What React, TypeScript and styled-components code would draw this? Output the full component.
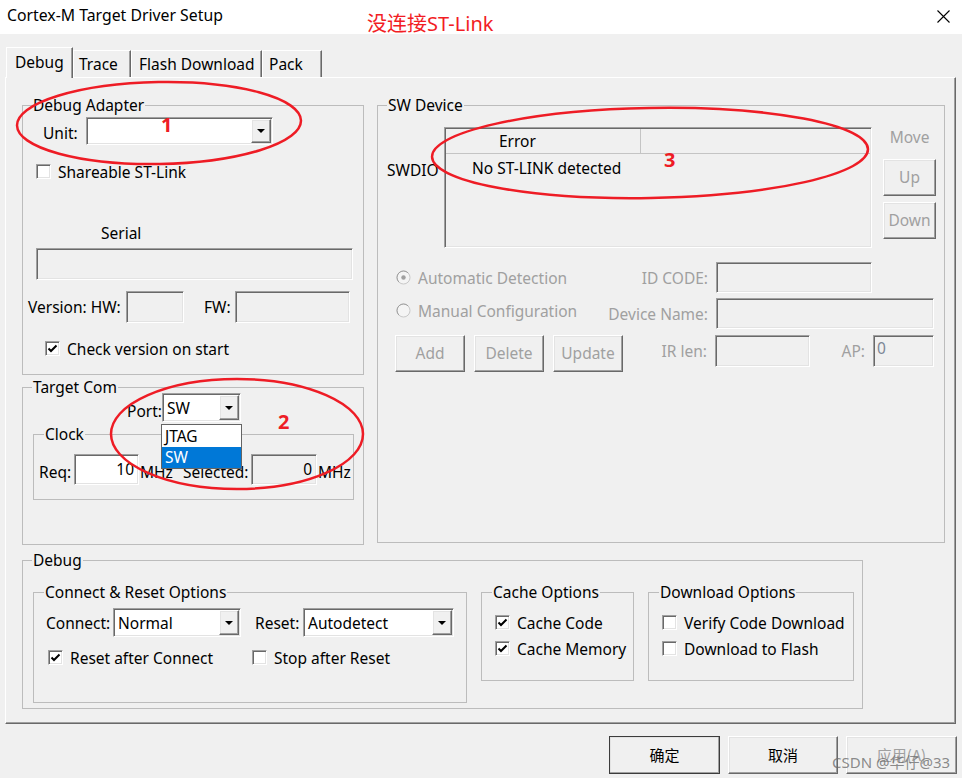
import styled, { createGlobalStyle, css } from 'styled-components';

const GlobalStyle = createGlobalStyle`
  * { box-sizing: border-box; }
  html, body { margin: 0; padding: 0; background: #f0f0f0; }
  body {
    font-family: 'Noto Sans', 'Noto Sans CJK SC', sans-serif;
    font-size: 15.5px;
    line-height: 20px;
    color: #000;
  }
`;

const sunken = css`
  border-style: solid;
  border-width: 1px;
  border-color: #a0a0a0 #ffffff #ffffff #a0a0a0;
  box-shadow: inset 1px 1px #696969, inset -1px -1px #e3e3e3;
`;

const raised = css`
  border-style: solid;
  border-width: 1px;
  border-color: #ffffff #696969 #696969 #ffffff;
  box-shadow: inset -1px -1px #a0a0a0, inset 1px 1px #e3e3e3;
  background: #f0f0f0;
`;

const Window = styled.div`
  position: relative;
  width: 962px;
  height: 778px;
  background: #f0f0f0;
  overflow: hidden;
`;

const TitleBar = styled.div`
  height: 34px;
  background: #fff;
  display: flex;
  align-items: flex-start;
`;

const Title = styled.div`
  width: 367px;
  padding: 5px 0 0 7px;
  font-size: 15.8px;
  white-space: nowrap;
`;

const Annotation = styled.div`
  margin-top: 12px;
  color: #f21d24;
  font-family: 'Noto Sans', 'Noto Sans CJK SC', sans-serif;
  font-size: 20px;
  line-height: 24px;
  white-space: nowrap;
`;

const CloseButton = styled.div`
  margin: 10px 12px 0 auto;
  width: 13px;
  height: 13px;
  svg {
    display: block;
  }
`;

const TabStrip = styled.div`
  display: flex;
  align-items: flex-end;
  height: 30px;
  margin: 13px 0 0 6px;
  position: relative;
  z-index: 2;
`;

const Tab = styled.div<{ $active?: boolean; $w: number; $pl: number }>`
  width: ${(p) => p.$w}px;
  height: ${(p) => (p.$active ? 31 : 27)}px;
  margin-bottom: ${(p) => (p.$active ? -1 : 0)}px;
  padding: ${(p) => (p.$active ? 4 : 3)}px 0 0 ${(p) => p.$pl}px;
  background: #f0f0f0;
  border-top: 1px solid #fff;
  border-left: 1px solid #fff;
  border-right: 1px solid #696969;
  box-shadow: inset -1px 0 #a0a0a0;
  white-space: nowrap;
`;

const Panel = styled.div`
  margin-left: 5px;
  width: 951px;
  height: 647px;
  padding: 17px 0 0 16px;
  border-style: solid;
  border-width: 1px;
  border-color: #fff #696969 #696969 #fff;
  box-shadow: inset -1px -1px #a0a0a0;
`;

const TopRow = styled.div`
  display: flex;
  align-items: flex-start;
  gap: 13px;
`;

const Column = styled.div`
  display: flex;
  flex-direction: column;
  gap: 2px;
  width: 342px;
`;

const Group = styled.fieldset<{ $w: number; $h: number; $mt?: number; $ml?: number }>`
  margin: ${(p) => p.$mt ?? 0}px 0 0 ${(p) => p.$ml ?? 0}px;
  padding: 0;
  min-width: 0;
  width: ${(p) => p.$w}px;
  height: ${(p) => p.$h}px;
  border: 1px solid #bcbcbc;
  flex: none;
`;

const Legend = styled.legend<{ $ml?: number }>`
  margin-left: ${(p) => p.$ml ?? 9}px;
  padding: 0 1px;
  line-height: 20px;
  white-space: nowrap;
`;

const Row = styled.div<{ $mt?: number; $pl?: number; $h?: number }>`
  position: relative;
  display: flex;
  align-items: center;
  margin-top: ${(p) => p.$mt ?? 0}px;
  padding-left: ${(p) => p.$pl ?? 0}px;
  height: ${(p) => (p.$h ? `${p.$h}px` : 'auto')};
`;

const Label = styled.span<{ $w?: number; $ml?: number; $pt?: number; $dim?: boolean }>`
  flex: none;
  width: ${(p) => (p.$w ? `${p.$w}px` : 'auto')};
  margin-left: ${(p) => p.$ml ?? 0}px;
  padding-top: ${(p) => p.$pt ?? 0}px;
  color: ${(p) => (p.$dim ? '#a0a0a0' : '#000')};
  white-space: nowrap;
`;

const Edit = styled.div<{ $w: number; $h: number; $white?: boolean; $left?: boolean; $dim?: boolean }>`
  ${sunken};
  flex: none;
  display: flex;
  align-items: ${(p) => (p.$left ? 'flex-start' : 'center')};
  justify-content: ${(p) => (p.$left ? 'flex-start' : 'flex-end')};
  width: ${(p) => p.$w}px;
  height: ${(p) => p.$h}px;
  padding: ${(p) => (p.$left ? '2px 0 0 3px' : '0 4px 2px 0')};
  background: ${(p) => (p.$white ? '#fff' : '#f0f0f0')};
  color: ${(p) => (p.$dim ? '#7d8796' : '#000')};
`;

const Combo = styled.div<{ $w: number; $h: number }>`
  ${sunken};
  flex: none;
  display: flex;
  width: ${(p) => p.$w}px;
  height: ${(p) => p.$h}px;
  padding: 1px;
  background: #fff;
`;

const ComboText = styled.span`
  flex: 1;
  align-self: center;
  padding: 1px 0 0 3px;
  white-space: nowrap;
  overflow: hidden;
`;

const ComboButton = styled.span`
  ${raised};
  width: 20px;
  display: flex;
  align-items: center;
  justify-content: center;
`;

const Caret = styled.span`
  width: 0;
  height: 0;
  border-left: 4px solid transparent;
  border-right: 4px solid transparent;
  border-top: 4px solid #000;
`;

const DropList = styled.div`
  position: absolute;
  left: 138px;
  top: 31px;
  z-index: 3;
  width: 81px;
  height: 45px;
  border: 1px solid #646464;
  background: #fff;
  padding-top: 1px;
`;

const DropItem = styled.div<{ $selected?: boolean }>`
  height: 21px;
  line-height: 21px;
  padding-left: 3px;
  background: ${(p) => (p.$selected ? '#0078d7' : '#fff')};
  color: ${(p) => (p.$selected ? '#fff' : '#000')};
`;

const CheckItem = styled.label<{ $w?: number; $clip?: boolean }>`
  display: flex;
  align-items: center;
  gap: 7px;
  height: 15px;
  width: ${(p) => (p.$w ? `${p.$w}px` : 'auto')};
  overflow-x: ${(p) => (p.$clip ? 'clip' : 'visible')};
  overflow-y: visible;
  white-space: nowrap;
  flex: none;
`;

const Tick = styled.span`
  ${sunken};
  flex: none;
  width: 15px;
  height: 15px;
  background: #fff;
  display: flex;
  align-items: center;
  justify-content: center;
  svg {
    display: block;
  }
`;

const DeviceTop = styled.div`
  display: flex;
  align-items: flex-start;
  margin-top: 12px;
`;

const SwdioLabel = styled.span`
  width: 66px;
  padding-left: 9px;
  margin-top: 33px;
`;

const ListBox = styled.div`
  ${sunken};
  width: 428px;
  height: 121px;
  padding: 1px;
  background: #f0f0f0;
  flex: none;
`;

const ListHeader = styled.div`
  display: flex;
  height: 25px;
  border-bottom: 1px solid #c4c4c4;
`;

const HeaderCell = styled.div`
  width: 195px;
  padding: 2px 0 0 53px;
  border-right: 1px solid #c4c4c4;
`;

const ListLine = styled.div`
  margin-top: 4px;
  padding-left: 26px;
`;

const MoveCol = styled.div`
  display: flex;
  flex-direction: column;
  align-items: center;
  width: 53px;
  margin-left: 11px;
`;

const MoveLabel = styled.span`
  color: #a0a0a0;
`;

const PushButton = styled.div<{ $w: number; $h: number; $mt?: number; $dim?: boolean; $default?: boolean }>`
  ${raised};
  ${(p) =>
    p.$default &&
    css`
      outline: 1px solid #3c3c3c;
      outline-offset: -1px;
      border-color: #fff #3c3c3c #3c3c3c #fff;
    `}
  flex: none;
  width: ${(p) => p.$w}px;
  height: ${(p) => p.$h}px;
  margin-top: ${(p) => p.$mt ?? 0}px;
  display: flex;
  align-items: center;
  justify-content: center;
  padding-bottom: 1px;
  color: ${(p) => (p.$dim ? '#a0a0a0' : '#000')};
  white-space: nowrap;
`;

const FieldRow = styled.div<{ $mt: number; $h: number; $top?: boolean }>`
  display: flex;
  align-items: ${(p) => (p.$top ? 'flex-start' : 'center')};
  margin-top: ${(p) => p.$mt}px;
  height: ${(p) => p.$h}px;
  padding-left: 18px;
`;

const OptionCell = styled.div<{ $pt?: number }>`
  display: flex;
  align-items: center;
  gap: 7px;
  width: 200px;
  color: #a0a0a0;
  margin-top: ${(p) => p.$pt ?? 0}px;
  white-space: nowrap;
  svg {
    display: block;
    flex: none;
  }
`;

const FieldLabel = styled.span<{ $w: number; $h?: number }>`
  flex: none;
  width: ${(p) => p.$w}px;
  height: ${(p) => (p.$h ? `${p.$h}px` : 'auto')};
  display: flex;
  align-items: center;
  justify-content: flex-end;
  padding-right: 8px;
  color: #a0a0a0;
  white-space: nowrap;
`;

const ActionButtons = styled.div`
  display: flex;
  gap: 9px;
  margin-left: -1px;
  width: 229px;
`;

const OptionsRow = styled.div`
  display: flex;
  align-items: flex-start;
  gap: 14px;
  margin-top: 12px;
  padding-left: 10px;
`;

const ButtonBar = styled.div`
  display: flex;
  justify-content: flex-end;
  gap: 8px;
  margin-top: 12px;
  padding-right: 5px;
  font-family: 'Noto Sans CJK SC', sans-serif;
  font-size: 15px;
`;

const Watermark = styled.div`
  position: absolute;
  left: 832px;
  top: 752px;
  z-index: 4;
  font-size: 15px;
  color: rgba(110, 110, 110, 0.8);
  white-space: nowrap;
`;

const Overlay = styled.svg`
  position: absolute;
  left: 0;
  top: 0;
  z-index: 5;
  pointer-events: none;
`;

function CheckBox({ checked }: { checked?: boolean }) {
  return (
    <Tick>
      {checked && (
        <svg width='11' height='11' viewBox='0 0 11 11'>
          <path d='M1.5 5.5 L4 8 L9.5 2.5' fill='none' stroke='#000' strokeWidth='2' />
        </svg>
      )}
    </Tick>
  );
}

function Radio({ checked }: { checked?: boolean }) {
  return (
    <svg width='15' height='15' viewBox='0 0 15 15'>
      <circle cx='7.5' cy='7.5' r='6.5' fill='#f4f4f4' stroke='#c8c8c8' />
      <path d='M2.9 12.1 A6.5 6.5 0 0 1 12.1 2.9' fill='none' stroke='#a0a0a0' />
      {checked && <circle cx='7.5' cy='7.5' r='2.2' fill='#a0a0a0' />}
    </svg>
  );
}

function Drop({ text, w, h }: { text?: string; w: number; h: number }) {
  return (
    <Combo $w={w} $h={h}>
      <ComboText>{text}</ComboText>
      <ComboButton>
        <Caret />
      </ComboButton>
    </Combo>
  );
}

export default function App() {
  return (
    <>
      <GlobalStyle />
      <Window>
        <TitleBar>
          <Title>Cortex-M Target Driver Setup</Title>
          <Annotation>没连接ST-Link</Annotation>
          <CloseButton>
            <svg width='13' height='13' viewBox='0 0 13 13'>
              <path d='M0.5 0.5 L12.5 12.5 M12.5 0.5 L0.5 12.5' stroke='#000' strokeWidth='1.1' />
            </svg>
          </CloseButton>
        </TitleBar>

        <TabStrip>
          <Tab $active $w={67} $pl={8}>
            Debug
          </Tab>
          <Tab $w={58} $pl={5}>
            Trace
          </Tab>
          <Tab $w={131} $pl={7}>
            Flash Download
          </Tab>
          <Tab $w={60} $pl={6}>
            Pack
          </Tab>
        </TabStrip>

        <Panel>
          <TopRow>
            <Column>
              <Group $w={342} $h={280}>
                <Legend>Debug Adapter</Legend>
                <Row $mt={2} $pl={20} $h={28}>
                  <Label $w={43} $pt={3}>
                    Unit:
                  </Label>
                  <Drop w={187} h={28} />
                </Row>
                <Row $mt={19} $pl={13}>
                  <CheckItem>
                    <CheckBox />
                    Shareable ST-Link
                  </CheckItem>
                </Row>
                <Row $mt={44} $pl={78}>
                  <Label>Serial</Label>
                </Row>
                <Row $mt={5} $pl={13}>
                  <Edit $w={317} $h={32} />
                </Row>
                <Row $mt={11} $pl={5} $h={32}>
                  <Label $w={98}>Version: HW:</Label>
                  <Edit $w={58} $h={32} />
                  <Label $w={31} $ml={20}>
                    FW:
                  </Label>
                  <Edit $w={115} $h={32} />
                </Row>
                <Row $mt={18} $pl={22}>
                  <CheckItem>
                    <CheckBox checked />
                    Check version on start
                  </CheckItem>
                </Row>
              </Group>

              <Group $w={342} $h={168}>
                <Legend>Target Com</Legend>
                <Row $mt={-4} $pl={104} $h={29}>
                  <Label $w={35} $pt={6}>
                    Port:
                  </Label>
                  <Drop text='SW' w={79} h={29} />
                  <DropList>
                    <DropItem>JTAG</DropItem>
                    <DropItem $selected>SW</DropItem>
                  </DropList>
                </Row>
                <Group $w={321} $h={76} $mt={2} $ml={10}>
                  <Legend $ml={10}>Clock</Legend>
                  <Row $mt={10} $pl={5} $h={31}>
                    <Label $w={35} $pt={4}>
                      Req:
                    </Label>
                    <Edit $w={65} $h={31} $white>
                      10
                    </Edit>
                    <Label $w={43} $pt={4} $ml={1}>
                      MHz
                    </Label>
                    <Label $w={68} $pt={4}>
                      Selected:
                    </Label>
                    <Edit $w={66} $h={31}>
                      0
                    </Edit>
                    <Label $pt={4} $ml={1}>
                      MHz
                    </Label>
                  </Row>
                </Group>
              </Group>
            </Column>

            <Group $w={568} $h={448}>
              <Legend>SW Device</Legend>
              <DeviceTop>
                <SwdioLabel>SWDIO</SwdioLabel>
                <ListBox>
                  <ListHeader>
                    <HeaderCell>Error</HeaderCell>
                  </ListHeader>
                  <ListLine>No ST-LINK detected</ListLine>
                </ListBox>
                <MoveCol>
                  <MoveLabel>Move</MoveLabel>
                  <PushButton $w={53} $h={37} $mt={12} $dim>
                    Up
                  </PushButton>
                  <PushButton $w={53} $h={37} $mt={6} $dim>
                    Down
                  </PushButton>
                </MoveCol>
              </DeviceTop>

              <FieldRow $mt={14} $h={31}>
                <OptionCell>
                  <Radio checked />
                  Automatic Detection
                </OptionCell>
                <FieldLabel $w={120}>ID CODE:</FieldLabel>
                <Edit $w={156} $h={31} />
              </FieldRow>
              <FieldRow $mt={5} $h={31}>
                <OptionCell $pt={-6}>
                  <Radio />
                  Manual Configuration
                </OptionCell>
                <FieldLabel $w={120}>Device Name:</FieldLabel>
                <Edit $w={218} $h={31} />
              </FieldRow>
              <FieldRow $mt={6} $h={37} $top>
                <ActionButtons>
                  <PushButton $w={70} $h={37} $dim>
                    Add
                  </PushButton>
                  <PushButton $w={70} $h={37} $dim>
                    Delete
                  </PushButton>
                  <PushButton $w={70} $h={37} $dim>
                    Update
                  </PushButton>
                </ActionButtons>
                <FieldLabel $w={91} $h={32}>
                  IR len:
                </FieldLabel>
                <Edit $w={95} $h={32} />
                <FieldLabel $w={63} $h={32}>
                  AP:
                </FieldLabel>
                <Edit $w={61} $h={32} $left $dim>
                  0
                </Edit>
              </FieldRow>
            </Group>
          </TopRow>

          <Group $w={841} $h={159} $mt={5}>
            <Legend>Debug</Legend>
            <OptionsRow>
              <Group $w={434} $h={121}>
                <Legend $ml={10}>Connect &amp; Reset Options</Legend>
                <Row $mt={6} $pl={12} $h={29}>
                  <Label $w={67}>Connect:</Label>
                  <Drop text='Normal' w={128} h={29} />
                  <Label $w={48} $ml={14}>
                    Reset:
                  </Label>
                  <Drop text='Autodetect' w={151} h={29} />
                </Row>
                <Row $mt={13} $pl={14}>
                  <CheckItem $w={204}>
                    <CheckBox checked />
                    Reset after Connect
                  </CheckItem>
                  <CheckItem>
                    <CheckBox />
                    Stop after Reset
                  </CheckItem>
                </Row>
              </Group>

              <Group $w={153} $h={99}>
                <Legend $ml={10}>Cache Options</Legend>
                <Row $mt={13} $pl={13}>
                  <CheckItem>
                    <CheckBox checked />
                    Cache Code
                  </CheckItem>
                </Row>
                <Row $mt={11} $pl={13}>
                  <CheckItem $w={137} $clip>
                    <CheckBox checked />
                    Cache Memory
                  </CheckItem>
                </Row>
              </Group>

              <Group $w={206} $h={99}>
                <Legend $ml={10}>Download Options</Legend>
                <Row $mt={13} $pl={13}>
                  <CheckItem $w={185} $clip>
                    <CheckBox />
                    Verify Code Download
                  </CheckItem>
                </Row>
                <Row $mt={11} $pl={13}>
                  <CheckItem>
                    <CheckBox />
                    Download to Flash
                  </CheckItem>
                </Row>
              </Group>
            </OptionsRow>
          </Group>
        </Panel>

        <ButtonBar>
          <PushButton $w={111} $h={38} $default>
            确定
          </PushButton>
          <PushButton $w={110} $h={38}>
            取消
          </PushButton>
          <PushButton $w={111} $h={38} $dim>
            应用(A)
          </PushButton>
        </ButtonBar>

        <Watermark>CSDN @华仔@33</Watermark>

        <Overlay width='962' height='778' viewBox='0 0 962 778'>
          <g fill='none' stroke='#ee1c25' strokeWidth='2.5'>
            <ellipse cx='159' cy='123' rx='142' ry='41' transform='rotate(-1 159 123)' />
            <ellipse cx='237' cy='434' rx='126' ry='55' />
            <ellipse cx='650' cy='153' rx='218' ry='45' transform='rotate(-1 650 153)' />
          </g>
          <g fill='#ee1c25' fontFamily='Noto Sans, sans-serif' fontWeight='700' fontSize='20'>
            <text x='161' y='132'>1</text>
            <text x='278' y='429'>2</text>
            <text x='664' y='167'>3</text>
          </g>
        </Overlay>
      </Window>
    </>
  );
}
